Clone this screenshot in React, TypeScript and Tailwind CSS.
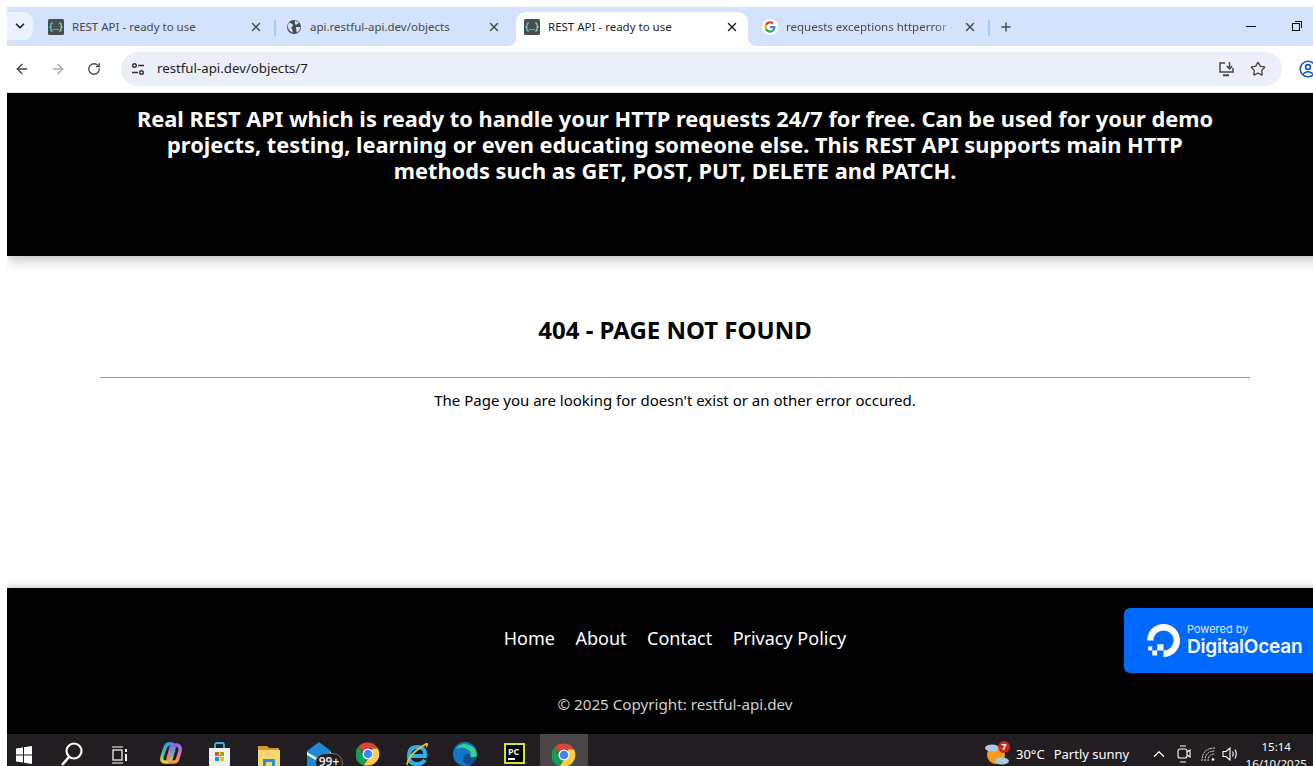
import React from 'react';
import { ArrowLeft, ArrowRight, ChevronDown, ChevronUp, Plus, RotateCw, Star, X } from 'lucide-react';

const SANS = 'font-["Noto_Sans","Open_Sans",sans-serif]';

function RestFavicon() {
  return (
    <svg width="16" height="16" viewBox="0 0 16 16" className="shrink-0">
      <rect width="16" height="16" rx="1.5" fill="#4a4d4f" />
      <path d="M5 4H4Q3 4 3 5V7L2 8L3 9V11Q3 12 4 12H5" fill="none" stroke="#4fe3d6" strokeWidth="1.2" />
      <path d="M11 4H12Q13 4 13 5V7L14 8L13 9V11Q13 12 12 12H11" fill="none" stroke="#7fe8a0" strokeWidth="1.2" />
      <path d="M5.5 10.5H6.5M7.5 10.5H8.5M9.5 10.5H10.5" stroke="#f5e050" strokeWidth="1.2" />
    </svg>
  );
}

function GlobeFavicon() {
  return (
    <svg width="16" height="16" viewBox="0 0 16 16" className="shrink-0">
      <circle cx="8" cy="8" r="7" fill="#474a4e" />
      <path d="M3 3.5L6.5 5L7 7L5 8.5L6.5 11V14L3 11L1.5 7ZM9 1.5L13 3.5L11 5.5H9ZM10 8H14.5L13 12L10.5 13.5Z" fill="#d3e3fd" />
    </svg>
  );
}

function GoogleG() {
  return (
    <svg width="16" height="16" viewBox="0 0 48 48" className="shrink-0">
      <circle cx="24" cy="24" r="24" fill="#fff" />
      <g transform="translate(7 7) scale(0.71)">
        <path fill="#EA4335" d="M24 9.5c3.5 0 6.7 1.2 9.2 3.6l6.9-6.9C35.900 2.400 30.500 0 24 0 14.600 0 6.500 5.400 2.600 13.200l8 6.200C12.500 13.700 17.800 9.500 24 9.500z" />
        <path fill="#4285F4" d="M47 24.500c0-1.600-.1-3.100-.4-4.500H24v9h12.900c-.6 3-2.300 5.500-4.800 7.200l7.700 6C44.300 38 47 31.800 47 24.500z" />
        <path fill="#FBBC05" d="M10.600 28.600c-.5-1.400-.8-3-.8-4.600s.3-3.200.8-4.600l-8-6.200C.9 16.500 0 20.100 0 24s.9 7.500 2.600 10.800l8-6.200z" />
        <path fill="#34A853" d="M24 48c6.500 0 11.900-2.100 15.900-5.800l-7.700-6c-2.200 1.500-4.900 2.300-8.200 2.300-6.200 0-11.500-4.200-13.400-9.900l-8 6.200C6.500 42.600 14.600 48 24 48z" />
      </g>
    </svg>
  );
}

function ChromeLogo() {
  return (
    <svg width="24" height="24" viewBox="0 0 48 48">
      <path fill="#db4437" d="M24 1a23 23 0 0 1 20 12H24a11 11 0 0 0-10.500 7.500L5 9A23 23 0 0 1 24 1z" />
      <path fill="#0f9d58" d="M5 9l8.600 13.500A11 11 0 0 0 22 34.800L15 47A23 23 0 0 1 5 9z" />
      <path fill="#ffcd40" d="M44 13a23 23 0 0 1-20 34h-9l8-12a11 11 0 0 0 10-16.500L31 13z" />
      <circle cx="24" cy="24" r="11" fill="#fff" />
      <circle cx="24" cy="24" r="8.500" fill="#4285f4" />
    </svg>
  );
}

function DoLogo() {
  return (
    <svg width="33" height="33" viewBox="0 0 32 32" className="shrink-0" fill="#fff">
      <path d="M16 32v-6.200a9.800 9.800 0 1 0-9.800-9.800H0a16 16 0 1 1 16 16z" />
      <path d="M16 25.800H9.800v-6.100H16zM9.800 30.600H5.100v-4.800h4.700zM5.100 25.800H1.100v-4h4z" />
    </svg>
  );
}

function Tab({
  icon,
  title,
  active,
  fade,
  className,
}: {
  icon: React.ReactNode;
  title: string;
  active?: boolean;
  fade?: boolean;
  className: string;
}) {
  return (
    <div className={`relative flex h-[34px] items-center shrink-0 pb-[4px] ${active ? 'bg-white rounded-t-[10px]' : ''} ${className}`}>
      {active && (
        <>
          <div className="absolute bottom-0 -left-[8px] h-[8px] w-[8px] bg-white">
            <div className="h-full w-full rounded-br-[8px] bg-[#d3e3fd]" />
          </div>
          <div className="absolute bottom-0 -right-[8px] h-[8px] w-[8px] bg-white">
            <div className="h-full w-full rounded-bl-[8px] bg-[#d3e3fd]" />
          </div>
        </>
      )}
      {icon}
      <span
        className={`ml-2 flex-1 overflow-hidden whitespace-nowrap text-[11.500px] ${active ? 'text-[#1f1f1f]' : 'text-[#474747]'} ${
          fade ? 'mr-[10px] mask-r-from-90% mask-r-to-100%' : ''
        }`}
      >
        {title}
      </span>
      <X size={14} strokeWidth={2.4} className={active ? 'text-[#1f1f1f] shrink-0' : 'text-[#474747] shrink-0'} />
    </div>
  );
}

function TabStrip() {
  return (
    <div className="flex h-[39px] items-end bg-[#d3e3fd]">
      <div className="mb-[6px] flex h-[28px] w-[26px] items-center justify-center rounded-r-[9px] bg-[#ebf2fd]">
        <ChevronDown size={14} strokeWidth={3} className="text-[#1f1f1f]" />
      </div>
      <Tab icon={<RestFavicon />} title="REST API - ready to use" className="ml-[15px] w-[215px]" />
      <div className="mb-[10px] ml-[11px] h-[16px] w-[2px] bg-[#a8c7fa]" />
      <Tab icon={<GlobeFavicon />} title="api.restful-api.dev/objects" className="ml-[10px] w-[215px]" />
      <Tab icon={<RestFavicon />} title="REST API - ready to use" active className="ml-[15px] w-[232px] pl-2 pr-[9px]" />
      <Tab icon={<GoogleG />} title="requests exceptions httperror 404" fade className="ml-[14px] w-[215px]" />
      <div className="mb-[10px] ml-[11px] h-[16px] w-[2px] bg-[#a8c7fa]" />
      <div className="mb-[11px] ml-[9px] flex h-[16px] w-[14px] items-center justify-center">
        <Plus size={16} strokeWidth={2.4} className="text-[#474747]" />
      </div>
      <div className="mb-[19px] ml-[233px] h-[1.500px] w-[10px] bg-[#111]" />
      <div className="relative mb-[15px] ml-[36px] h-[10px] w-[10px]">
        <div className="absolute bottom-0 left-0 h-[8px] w-[8px] border border-[#111]" />
        <div className="absolute right-0 top-0 h-[7px] w-[7px] rounded-tr-[1px] border-r border-t border-[#111]" />
      </div>
    </div>
  );
}

function AddressBar() {
  return (
    <div className="flex h-[46px] items-center bg-white">
      <ArrowLeft size={16} strokeWidth={2} className="ml-[7px] shrink-0 text-[#474747]" />
      <ArrowRight size={16} strokeWidth={2} className="ml-[20px] shrink-0 text-[#a9a9a9]" />
      <RotateCw size={14} strokeWidth={2.2} className="ml-[21px] shrink-0 text-[#474747]" />
      <div className="ml-[20px] flex h-[34px] w-[1161px] shrink-0 items-center rounded-full bg-[#ebeff9]">
        <svg width="16" height="16" viewBox="0 0 16 16" className="ml-[9px] shrink-0" fill="none" stroke="#333" strokeWidth="1.4">
          <circle cx="4.500" cy="4.500" r="1.800" />
          <path d="M8 4.500H14M2 11.500H8" />
          <circle cx="11.500" cy="11.500" r="1.800" />
        </svg>
        <span className="ml-[11px] text-[13.250px] text-[#1f1f1f]">restful-api.dev/objects/7</span>
        <svg width="17" height="16" viewBox="0 0 17 16" className="ml-auto shrink-0" fill="none" stroke="#474747" strokeWidth="1.500">
          <path d="M7 2H2V11H15V7" />
          <path d="M5 14.300H11" strokeWidth="2" />
          <path d="M11.500 1V7.500M8.800 5L11.500 7.800L14.200 5" />
        </svg>
        <Star size={16} strokeWidth={2} className="ml-[15px] mr-[16px] shrink-0 text-[#474747]" />
      </div>
      <svg width="18" height="18" viewBox="0 0 18 18" className="ml-[17px] shrink-0" fill="none" stroke="#0b57d0" strokeWidth="1.600">
        <circle cx="9" cy="9" r="7.800" />
        <circle cx="9" cy="7" r="2.400" />
        <path d="M4 14Q9 9.500 14 14" />
      </svg>
    </div>
  );
}

function Page() {
  return (
    <div className="h-[641px] overflow-hidden">
      <div className={`flex h-full w-[1336px] flex-col bg-white ${SANS}`}>
        <header className="relative z-10 h-[163px] shrink-0 bg-black pt-[13px] shadow-[0_4px_12px_rgba(0,0,0,0.25)]">
          <h2 className="mx-auto w-[1100px] text-center text-[21.800px] font-bold leading-[26px] text-white">
            Real REST API which is ready to handle your HTTP requests 24/7 for free. Can be used for your demo projects, testing,
            learning or even educating someone else. This REST API supports main HTTP methods such as GET, POST, PUT, DELETE and PATCH.
          </h2>
        </header>
        <main className="flex-1 pt-[59px] text-center text-black">
          <h1 className="text-[24px] font-bold leading-[30px]">404 - PAGE NOT FOUND</h1>
          <hr className="mx-auto mt-[32px] w-[1150px] border-t border-[#9a9a9a]" />
          <p className="mt-[10px] text-[15px] leading-[24px]">The Page you are looking for doesn't exist or an other error occured.</p>
        </main>
        <footer className="relative z-10 h-[146px] shrink-0 bg-black shadow-[0_-2px_6px_rgba(0,0,0,0.2)]">
          <nav className="flex justify-center gap-[20.500px] pt-[37px] text-[18px] leading-[27px] text-white">
            <a href="#">Home</a>
            <a href="#">About</a>
            <a href="#">Contact</a>
            <a href="#">Privacy Policy</a>
          </nav>
          <p className="mt-[40px] text-center text-[15.200px] leading-[24px] text-[#cfcfcf]">© 2025 Copyright: restful-api.dev</p>
          <div className="absolute left-[1117px] top-[20px] flex h-[65px] w-[219px] items-center rounded-[6px] bg-[#0069ff] pl-[23px] font-[Inter,sans-serif] text-white">
            <DoLogo />
            <div className="ml-[7px]">
              <div className="text-[11px] leading-[13px] text-[#dce9ff]">Powered by</div>
              <div className="text-[19px] font-semibold leading-[22px] tracking-[-0.2px]">DigitalOcean</div>
            </div>
          </div>
        </footer>
      </div>
    </div>
  );
}

function Taskbar() {
  return (
    <div className={`flex h-[32px] items-start overflow-hidden bg-[#211d20] pt-[8px] text-white ${SANS}`}>
      <svg width="16" height="18" viewBox="0 0 16 18" className="ml-[9px] mt-[4px] shrink-0" fill="#fff">
        <path d="M0 2.500L7 1.500V8.500H0ZM8 1.300L16 0V8.500H8ZM0 9.500H7V16.500L0 15.500ZM8 9.500H16V18L8 16.700Z" />
      </svg>
      <svg width="22" height="26" viewBox="0 0 22 26" className="ml-[29px] shrink-0" fill="none" stroke="#fff" strokeWidth="2.200">
        <circle cx="13" cy="9" r="7.500" />
        <path d="M8 15L1 23" strokeWidth="2.600" />
      </svg>
      <svg width="16" height="18" viewBox="0 0 16 18" className="ml-[29px] mt-[4px] shrink-0" fill="none" stroke="#fff" strokeWidth="1.200">
        <path d="M0 1H11M0 17H11" />
        <rect x="1" y="4" width="9" height="10" />
        <path d="M14 3V6M14 8V15" strokeWidth="2" />
      </svg>
      <svg width="22" height="23" viewBox="0 0 22 23" className="ml-[32px] shrink-0" fill="none" strokeLinecap="round">
        <defs>
          <linearGradient id="copilotA" x1="0" y1="0" x2="0" y2="1">
            <stop offset="0" stopColor="#25a5e8" />
            <stop offset="0.6" stopColor="#4fc78a" />
            <stop offset="1" stopColor="#e8d13c" />
          </linearGradient>
          <linearGradient id="copilotB" x1="0" y1="0" x2="0" y2="1">
            <stop offset="0" stopColor="#8a6ae8" />
            <stop offset="0.5" stopColor="#e06bc8" />
            <stop offset="1" stopColor="#f59a3c" />
          </linearGradient>
        </defs>
        <path d="M12 2H9Q6 2 5 6L2 15Q1 20 5 20H8Q10 20 11 17L14 6" stroke="url(#copilotA)" strokeWidth="3.500" />
        <path d="M10 20H14Q17 20 18 16L20 9Q21 4 17 3H14Q12 3 11 6L8 17" stroke="url(#copilotB)" strokeWidth="3.500" />
      </svg>
      <svg width="23" height="26" viewBox="0 0 23 26" className="ml-[26px] shrink-0">
        <path d="M7 6V3Q7 1 9 1H14Q16 1 16 3V6" fill="none" stroke="#35b8ef" strokeWidth="1.800" />
        <path d="M1 6H22V22Q22 26 18 26H5Q1 26 1 22Z" fill="#eef0f2" />
        <rect x="7" y="10" width="4" height="4" fill="#f25022" />
        <rect x="12" y="10" width="4" height="4" fill="#7fba00" />
        <rect x="7" y="15" width="4" height="4" fill="#00a4ef" />
        <rect x="12" y="15" width="4" height="4" fill="#ffb900" />
      </svg>
      <svg width="22" height="22" viewBox="0 0 22 22" className="ml-[27px] mt-[2px] shrink-0">
        <path d="M0 2H9L11 4H21V22H0Z" fill="#d99a24" />
        <path d="M0 6H22V22H0Z" fill="#f7d774" />
        <path d="M5 22V15H17V22H14V18H8V22Z" fill="#2b8fe0" />
      </svg>
      <div className="relative ml-[27px] h-[27px] w-[24px] shrink-0">
        <svg width="24" height="27" viewBox="0 0 24 27">
          <path d="M0 9L12 0L24 9V27H0Z" fill="#1e8ad6" />
          <path d="M0 10L12 17L24 10V13L12 20L0 13Z" fill="#eef7fd" />
        </svg>
        <span className="absolute left-[8px] top-[11px] h-[20px] w-[28px] rounded-full border border-[#777] bg-[#211d20] text-center text-[12px] font-semibold leading-[15px] text-[#e8e8e8]">
          99+
        </span>
      </div>
      <div className="ml-[25px] shrink-0">
        <ChromeLogo />
      </div>
      <svg width="22" height="25" viewBox="0 0 22 25" className="ml-[26px] shrink-0" fill="none">
        <path d="M3 14H19Q20 5 11 5Q3 5 3 14Q3 22 11 22Q16 22 19 18" stroke="#2eb0e8" strokeWidth="4" />
        <path d="M1 23Q2 12 20 2Q23 1 20 5" stroke="#f2c233" strokeWidth="1.500" />
      </svg>
      <svg width="24" height="24" viewBox="0 0 24 24" className="ml-[25px] shrink-0">
        <circle cx="12" cy="12" r="12" fill="#1078c8" />
        <path d="M24 14Q23 3 12 2Q6 2 3 7Q8 4 14 7Q20 10 17 15H24Z" fill="#3ccf8e" />
        <path d="M24 14Q22 22 15 22Q9 22 10 16Q11 12 15 12Q18 14 17 15Q19 17 24 14Z" fill="#0c4f8a" />
      </svg>
      <div className="ml-[27px] mt-[1px] flex h-[21px] w-[21px] shrink-0 flex-col border-[2px] border-[#d5e22c] bg-black pl-[2px] pt-[2px] text-[9px] font-bold leading-[9px] text-[#e8f5e8]">
        PC
        <div className="mt-[2px] h-[1.500px] w-[7px] bg-white" />
      </div>
      <div className="ml-[15px] -mt-[8px] flex h-[32px] w-[48px] shrink-0 justify-center bg-[#4a4648] pt-[9px]">
        <ChromeLogo />
      </div>
      <div className="ml-[397px] relative h-[24px] w-[24px] shrink-0">
        <svg width="24" height="24" viewBox="0 0 24 24">
          <circle cx="11" cy="13" r="9" fill="#f59a23" />
          <ellipse cx="7" cy="6" rx="7" ry="3.500" fill="#a9cbe8" />
          <ellipse cx="17" cy="19" rx="7" ry="3.500" fill="#a9cbe8" />
        </svg>
        <span className="absolute -right-[1px] -top-[1px] h-[12px] w-[12px] rounded-full bg-[#c42b1c] text-center text-[9px] font-bold leading-[12px]">7</span>
      </div>
      <span className="ml-[7px] mt-[2px] whitespace-nowrap text-[13px] leading-[20px]">30°C</span>
      <span className="ml-[9px] mt-[2px] whitespace-nowrap text-[13px] leading-[20px]">Partly sunny</span>
      <ChevronUp size={18} strokeWidth={1.600} className="ml-[21px] mt-[3px] shrink-0" />
      <svg width="14" height="18" viewBox="0 0 14 18" className="ml-[9px] mt-[3px] shrink-0" fill="none" stroke="#fff" strokeWidth="1.100">
        <path d="M3 1H9M3 17H9" />
        <rect x="1" y="4" width="9" height="9" rx="2" />
        <path d="M10 7L13 5V12L10 10" />
      </svg>
      <svg width="15" height="15" viewBox="0 0 15 15" className="ml-[10px] mt-[5px] shrink-0" fill="none" stroke="#ddd" strokeWidth="1">
        <path d="M1 14Q1 1 14 1M4 14Q4 4 14 4M7 14Q7 7 14 7" strokeDasharray="2 0.700" />
        <circle cx="12" cy="12.500" r="1.300" fill="#fff" stroke="none" />
      </svg>
      <svg width="16" height="16" viewBox="0 0 16 16" className="ml-[6px] mt-[4px] shrink-0" fill="none" stroke="#fff" strokeWidth="1.100">
        <path d="M1 5.500H4L8 2V14L4 10.500H1Z" />
        <path d="M10.500 5.500Q12 8 10.500 10.500M13 3.500Q15.500 8 13 12.500" />
      </svg>
      <div className="ml-[3px] -mt-[4px] w-[70px] shrink-0 whitespace-nowrap text-center text-[11.500px] leading-[17px]">
        <div>15:14</div>
        <div>16/10/2025</div>
      </div>
    </div>
  );
}

export default function App() {
  return (
    <div className={`h-[766px] w-[1313px] overflow-hidden bg-white pl-[7px] pt-[7px] ${SANS}`}>
      <TabStrip />
      <AddressBar />
      <div className="h-[1px] bg-[#e3e3e3]" />
      <Page />
      <Taskbar />
    </div>
  );
}
